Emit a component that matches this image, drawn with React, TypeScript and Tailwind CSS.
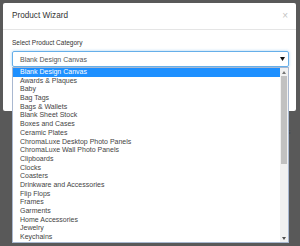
const CATEGORIES = [
  "Blank Design Canvas",
  "Awards & Plaques",
  "Baby",
  "Bag Tags",
  "Bags & Wallets",
  "Blank Sheet Stock",
  "Boxes and Cases",
  "Ceramic Plates",
  "ChromaLuxe Desktop Photo Panels",
  "ChromaLuxe Wall Photo Panels",
  "Clipboards",
  "Clocks",
  "Coasters",
  "Drinkware and Accessories",
  "Flip Flops",
  "Frames",
  "Garments",
  "Home Accessories",
  "Jewelry",
  "Keychains",
];

const FONT = "font-['Liberation_Sans',Arial,sans-serif]";

const App = () => {
  return (
    <div
      className={`relative h-[246px] w-[300px] overflow-hidden bg-[#595959] ${FONT}`}
    >
      <div className="pl-[3px] pt-[3px]">
        <div className="h-[108px] w-[293px] rounded-[2px] bg-white">
          <div className="flex h-[27px] items-center justify-between border-b border-[#e5e5e5] pl-[9px] pr-[8px]">
            <span className="text-[8.2px] leading-none text-[#333]">
              Product Wizard
            </span>
            <span className="text-[10px] leading-none text-[#c4c4c4]">
              ×
            </span>
          </div>
          <div className="px-[9px] pt-[9px]">
            <div className="h-[8px] text-[6.5px] leading-[8px] text-[#333]">
              Select Product Category
            </div>
            <div className="mt-[4px] flex h-[16px] w-[277px] items-center justify-between rounded-[2px] border border-[#66afe9] pl-[7px] pr-[3px] shadow-[0_0_3px_rgba(102,175,233,0.6)]">
              <span className="text-[7px] leading-none text-[#555]">
                Blank Design Canvas
              </span>
              <svg width="5" height="4" viewBox="0 0 5 4" aria-hidden>
                <path d="M0 0h5L2.5 4z" fill="#111" />
              </svg>
            </div>
          </div>
        </div>
      </div>

      <span className="absolute left-[283px] top-[127px] text-[7px] text-[#444]">
        ns
      </span>

      {/* native select popup */}
      <div className="absolute left-[12px] top-[67px] flex h-[176px] w-[277px] border border-[#a9b8d0] bg-white">
        <ul className="flex-1">
          {CATEGORIES.map((c, i) => (
            <li
              key={c}
              className={`h-[8.7px] pl-[7px] text-[7px] leading-[8.7px] ${
                i === 0 ? "bg-[#1e90ff] text-white" : "text-[#444]"
              }`}
            >
              {c}
            </li>
          ))}
        </ul>
        <div className="flex w-[8px] flex-col bg-[#f1f1f1]">
          <div className="flex h-[8px] items-center justify-center">
            <svg width="4" height="3" viewBox="0 0 4 3" aria-hidden>
              <path d="M0 3h4L2 0z" fill="#777" />
            </svg>
          </div>
          <div className="mx-[1px] h-[88px] bg-[#c1c1c1]" />
          <div className="flex-1" />
          <div className="flex h-[8px] items-center justify-center">
            <svg width="4" height="3" viewBox="0 0 4 3" aria-hidden>
              <path d="M0 0h4L2 3z" fill="#505050" />
            </svg>
          </div>
        </div>
      </div>
    </div>
  );
};

export default App;
